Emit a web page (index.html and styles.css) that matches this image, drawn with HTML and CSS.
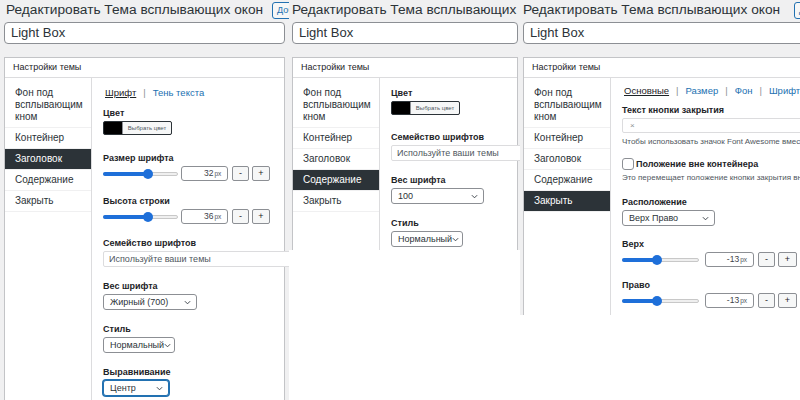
FILE: index.html
```html
<!DOCTYPE html>
<html lang="ru">
<head>
<meta charset="utf-8">
<title>Темы всплывающих окон</title>
<link rel="stylesheet" href="styles.css">
</head>
<body>

<section class="panel p1">
  <div class="page">
    <div class="head"><h1>Редактировать Тема всплывающих окон</h1><span class="add">Добавить</span></div>
    <div class="name">Light Box</div>
    <div class="box">
      <div class="box-h">Настройки темы</div>
      <div class="box-b">
        <ul class="nav">
          <li class="first">Фон под всплывающим кном</li>
          <li>Контейнер</li>
          <li class="on">Заголовок</li>
          <li>Содержание</li>
          <li>Закрыть</li>
        </ul>
        <div class="content">
          <div class="tabs"><span class="cur">Шрифт</span><span class="sep">|</span><span class="lnk">Тень текста</span></div>
          <div class="field f-color">
            <div class="lbl">Цвет</div>
            <div class="picker"><span class="sw"></span><span class="pick">Выбрать цвет</span></div>
          </div>
          <div class="field f-slide">
            <div class="lbl">Размер шрифта</div>
            <div class="numrow"><span class="rng"><span class="fill" style="width:62%"></span></span><span class="num">32<small>px</small></span><span class="btn">-</span><span class="btn plus">+</span></div>
          </div>
          <div class="field">
            <div class="lbl">Высота строки</div>
            <div class="numrow"><span class="rng"><span class="fill" style="width:62%"></span></span><span class="num">36<small>px</small></span><span class="btn">-</span><span class="btn plus">+</span></div>
          </div>
          <div class="field">
            <div class="lbl">Семейство шрифтов</div>
            <div class="text wide">Используйте ваши темы</div>
          </div>
          <div class="field">
            <div class="lbl">Вес шрифта</div>
            <div class="sel w94">Жирный (700)<svg viewBox="0 0 8 5"><path d="M1 1l3 3 3-3"/></svg></div>
          </div>
          <div class="field">
            <div class="lbl">Стиль</div>
            <div class="sel w72">Нормальный<svg viewBox="0 0 8 5"><path d="M1 1l3 3 3-3"/></svg></div>
          </div>
          <div class="field">
            <div class="lbl">Выравнивание</div>
            <div class="sel w66 focus">Центр<svg viewBox="0 0 8 5"><path d="M1 1l3 3 3-3"/></svg></div>
          </div>
        </div>
      </div>
    </div>
  </div>
</section>

<section class="panel p2">
  <div class="page">
    <div class="head"><h1>Редактировать Тема всплывающих окон</h1></div>
    <div class="name">Light Box</div>
    <div class="box">
      <div class="box-h">Настройки темы</div>
      <div class="box-b">
        <ul class="nav">
          <li class="first">Фон под всплывающим кном</li>
          <li>Контейнер</li>
          <li>Заголовок</li>
          <li class="on">Содержание</li>
          <li>Закрыть</li>
        </ul>
        <div class="content c2">
          <div class="field f-color">
            <div class="lbl">Цвет</div>
            <div class="picker"><span class="sw"></span><span class="pick">Выбрать цвет</span></div>
          </div>
          <div class="field">
            <div class="lbl">Семейство шрифтов</div>
            <div class="text wide">Используйте ваши темы</div>
          </div>
          <div class="field">
            <div class="lbl">Вес шрифта</div>
            <div class="sel w93">100<svg viewBox="0 0 8 5"><path d="M1 1l3 3 3-3"/></svg></div>
          </div>
          <div class="field">
            <div class="lbl">Стиль</div>
            <div class="sel w72">Нормальный<svg viewBox="0 0 8 5"><path d="M1 1l3 3 3-3"/></svg></div>
          </div>
        </div>
      </div>
    </div>
  </div>
</section>

<section class="panel p3">
  <div class="page">
    <div class="head"><h1>Редактировать Тема всплывающих окон</h1><span class="add">Добавить</span></div>
    <div class="name">Light Box</div>
    <div class="box">
      <div class="box-h">Настройки темы</div>
      <div class="box-b">
        <ul class="nav">
          <li class="first">Фон под всплывающим кном</li>
          <li>Контейнер</li>
          <li>Заголовок</li>
          <li>Содержание</li>
          <li class="on">Закрыть</li>
        </ul>
        <div class="content c3">
          <div class="tabs"><span class="cur">Основные</span><span class="sep">|</span><span class="lnk">Размер</span><span class="sep">|</span><span class="lnk">Фон</span><span class="sep">|</span><span class="lnk">Шрифт</span><span class="sep">|</span><span class="lnk">Тень</span></div>
          <div class="field f-close">
            <div class="lbl">Текст кнопки закрытия</div>
            <div class="text full">×</div>
            <p class="help">Чтобы использовать значок Font Awesome вместо текста, введите класс значка.</p>
          </div>
          <div class="field f-check">
            <label class="chk"><span class="box-c"></span>Положение вне контейнера</label>
            <p class="help">Это перемещает положение кнопки закрытия вне контейнера.</p>
          </div>
          <div class="field">
            <div class="lbl">Расположение</div>
            <div class="sel w93">Верх Право<svg viewBox="0 0 8 5"><path d="M1 1l3 3 3-3"/></svg></div>
          </div>
          <div class="field">
            <div class="lbl">Верх</div>
            <div class="numrow"><span class="rng r3"><span class="fill" style="width:46%"></span></span><span class="num">-13<small>px</small></span><span class="btn">-</span><span class="btn plus">+</span></div>
          </div>
          <div class="field">
            <div class="lbl">Право</div>
            <div class="numrow"><span class="rng r3"><span class="fill" style="width:46%"></span></span><span class="num">-13<small>px</small></span><span class="btn">-</span><span class="btn plus">+</span></div>
          </div>
        </div>
      </div>
    </div>
  </div>
</section>

</body>
</html>
```

FILE: styles.css
```css
* { box-sizing: border-box; margin: 0; padding: 0; }

body {
  margin: 0;
  width: 800px;
  height: 400px;
  overflow: hidden;
  background: #fff;
  display: flex;
  align-items: flex-start;
  font-family: "Liberation Sans", Arial, sans-serif;
  color: #1d2327;
}

.panel {
  flex: none;
  background: #f0f0f1;
  overflow: hidden;
  display: flex;
}

.p1 { width: 289px; height: 400px; padding-left: 4px; }
.p2 { width: 231px; height: 250px; padding-left: 3px; }
.p3 { width: 280px; height: 315px; padding-left: 3px; }

.page {
  flex: none;
  display: flex;
  flex-direction: column;
  height: 100%;
}
.p1 .page { width: 281px; }
.p2 .page { width: 226px; }
.p3 .page { width: 320px; }

.head {
  height: 20px;
  display: flex;
  align-items: center;
  white-space: nowrap;
}
.p1 .head { padding-left: 2px; }
.head h1 {
  font-size: 13.7px;
  font-weight: 400;
  line-height: 20px;
  color: #2c3338;
}
.add {
  margin-left: 9px;
  height: 17px;
  padding: 0 4px;
  border: 1px solid #2271b1;
  border-radius: 3px;
  color: #2271b1;
  font-size: 9px;
  line-height: 15px;
  background: #f6f7f7;
}
.p3 .add { margin-left: 14px; }

.name {
  margin-top: 2px;
  height: 22px;
  background: #fff;
  border: 1px solid #8c8f94;
  border-radius: 4px;
  padding-left: 6px;
  font-size: 13px;
  line-height: 20px;
  color: #2c3338;
  white-space: nowrap;
}

.box {
  margin-top: 13px;
  flex: 1;
  background: #fff;
  border: 1px solid #c3c4c7;
  border-bottom: none;
  display: flex;
  flex-direction: column;
}
.box-h {
  height: 20px;
  border-bottom: 1px solid #dcdcde;
  padding-left: 8px;
  font-size: 9px;
  line-height: 19px;
  color: #1d2327;
}
.box-b {
  flex: 1;
  display: flex;
}

.nav {
  list-style: none;
  width: 87px;
  flex: none;
  border-right: 1px solid #dcdcde;
}
.nav li {
  padding: 4px 10px;
  font-size: 10px;
  line-height: 12px;
  border-bottom: 1px solid #f0f0f1;
  color: #2c3338;
}
.nav li.first { padding: 9px 10px 4px; }
.nav li.on { background: #2c3338; color: #fff; }

.content {
  flex: 1;
  padding: 8px 11px 0;
  min-width: 0;
}

.tabs {
  font-size: 9.5px;
  line-height: 14px;
  white-space: nowrap;
  margin-bottom: 6px;
  padding-left: 2px;
}
.tabs .cur { color: #1d2327; text-decoration: underline; }
.tabs .lnk { color: #2271b1; }
.tabs .sep { color: #8c8f94; margin: 0 7px; }

.field { margin-bottom: 12px; }
.field.f-color { margin-bottom: 16px; }
.field.f-slide { margin-bottom: 13px; }

.lbl {
  font-size: 9px;
  font-weight: 700;
  line-height: 14px;
  margin-bottom: 1px;
  white-space: nowrap;
  color: #1d2327;
}

.picker {
  display: flex;
  width: 69px;
  height: 14px;
  border: 1px solid #2c3338;
  border-radius: 2px;
  background: #000;
  overflow: hidden;
}
.picker .sw { width: 18px; flex: none; }
.picker .pick {
  flex: 1;
  background: #f6f7f7;
  border-left: 1px solid #8c8f94;
  font-size: 6px;
  line-height: 12px;
  text-align: center;
  color: #50575e;
  white-space: nowrap;
}

.numrow {
  display: flex;
  align-items: center;
  height: 15px;
}
.rng {
  width: 78px;
  height: 4px;
  margin-right: 3px;
  border-radius: 2px;
  background: #efefef;
  border: 1px solid #c8c8c8;
  position: relative;
  display: block;
}
.rng.r3 { width: 77px; margin-right: 6px; }
.rng .fill {
  position: absolute;
  left: -1px;
  top: -1px;
  height: 4px;
  border-radius: 2px;
  background: #1e6fd9;
}
.rng .fill::after {
  content: "";
  position: absolute;
  right: -5px;
  top: -3px;
  width: 10px;
  height: 10px;
  border-radius: 50%;
  background: #1e6fd9;
}
.num {
  width: 49px;
  height: 15px;
  border: 1px solid #8c8f94;
  border-radius: 3px;
  background: #fff;
  text-align: right;
  padding-right: 6px;
  font-size: 8.5px;
  line-height: 13px;
  color: #3c434a;
  margin-right: 4px;
}
.num small { font-size: 6.5px; color: #50575e; margin-left: 1px; }
.btn {
  width: 17px;
  height: 15px;
  border: 1px solid #8c8f94;
  border-radius: 2px;
  background: #f6f7f7;
  font-size: 9px;
  line-height: 13px;
  text-align: center;
  color: #1d2327;
  margin-right: 3px;
}
.btn.plus { width: 19px; }

.text {
  height: 16px;
  border: 1px solid #dcdcde;
  border-radius: 2px;
  background: #fff;
  padding-left: 5px;
  font-size: 9px;
  line-height: 14px;
  color: #50575e;
  white-space: nowrap;
}
.text.wide { width: 188px; }
.text.full { width: 220px; height: 15px; padding-left: 7px; color: #8c8f94; font-size: 8px; line-height: 13px; }

.sel {
  height: 16px;
  border: 1px solid #8c8f94;
  border-radius: 3px;
  background: #fff;
  padding: 0 5px 0 6px;
  font-size: 9px;
  line-height: 14px;
  color: #2c3338;
  display: flex;
  align-items: center;
  justify-content: space-between;
  white-space: nowrap;
}
.sel svg {
  width: 7px;
  height: 5px;
  fill: none;
  stroke: #3c434a;
  stroke-width: 1.1;
  flex: none;
}
.w94 { width: 94px; }
.w93 { width: 93px; }
.w72 { width: 72px; padding-right: 4px; }
.w66 { width: 66px; }
.sel.focus { border-color: #2271b1; box-shadow: 0 0 0 1px #2271b1; }

.c2 .field.f-color { margin-bottom: 15px; }

.c3 { padding-top: 6px; }
.c3 .tabs { margin-bottom: 5px; }
.help {
  font-size: 8px;
  line-height: 10px;
  color: #50575e;
  white-space: nowrap;
  margin-top: 4px;
}
.f-check .help { margin-top: 2px; }
.chk {
  display: flex;
  align-items: center;
  gap: 2px;
  font-size: 9px;
  font-weight: 700;
  line-height: 14px;
  white-space: nowrap;
}
.chk .box-c {
  width: 12px;
  height: 12px;
  border: 1px solid #8c8f94;
  border-radius: 3px;
  background: #fff;
}
.c3 .field { margin-bottom: 11px; }
.c3 .field.f-close { margin-bottom: 10px; }
.c3 .field.f-check { margin-bottom: 12px; }
.c3 .numrow { margin-top: 1px; }
```
